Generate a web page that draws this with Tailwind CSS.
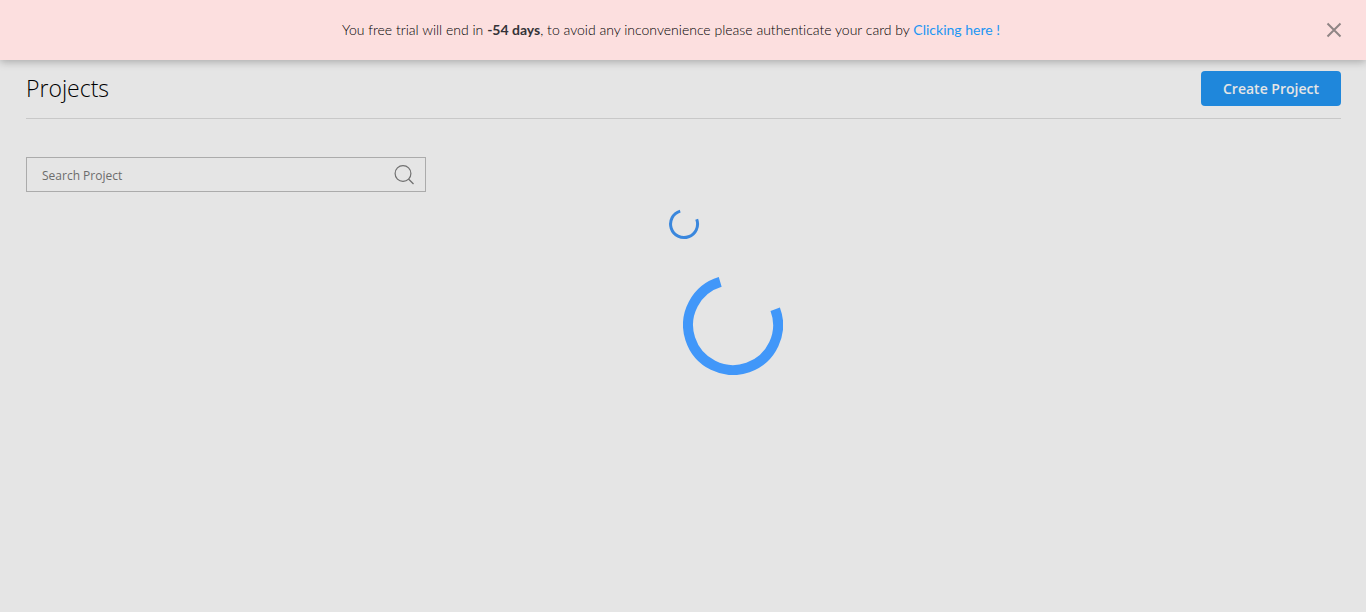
<!DOCTYPE html>
<html lang="en">
<head>
<meta charset="utf-8">
<meta name="viewport" content="width=device-width, initial-scale=1">
<title>Projects</title>
<script src="https://cdn.jsdelivr.net/npm/@tailwindcss/browser@4"></script>
</head>
<body class="min-h-screen bg-[#e5e5e5] font-['Open_Sans',sans-serif] text-[#1d1d1d]">
  <div role="alert" class="relative flex h-15 items-center bg-[#fcdfdf] pr-[22px] pl-6 shadow-[0_2px_8px_rgba(0,0,0,0.26)]">
    <p class="flex-1 pr-1.5 text-center font-['Lato',sans-serif] text-sm font-light text-black [font-variant-ligatures:none]">You free trial will end in <b class="font-bold text-[#333338]">-54 days</b>, to avoid any inconvenience please authenticate your card by <a href="#" class="font-normal text-[#2196f3]">Clicking here !</a></p>
    <button type="button" aria-label="Close" class="p-0.5 text-[#8f8585]">
      <svg class="size-4" viewBox="0 0 16 16" fill="none" stroke="currentColor" stroke-width="2"><path d="M1.5 1.5l13 13M14.5 1.5l-13 13"/></svg>
    </button>
  </div>
  <main class="pr-[25px] pl-[26px]">
    <header class="flex items-center justify-between border-b border-[#c8c8c8] pt-[11px] pb-3">
      <h1 class="pb-0.5 text-[23px] leading-8 font-light text-black">Projects</h1>
      <button type="button" class="h-[35px] w-35 rounded bg-[#1f87db] text-sm font-semibold text-[#e5e5e5]">Create Project</button>
    </header>
    <label class="mt-[38px] flex h-[35px] w-full max-w-100 items-center border border-[#ababab] pr-[11px] pl-[15px]">
      <input type="text" placeholder="Search Project" aria-label="Search Project" class="min-w-0 flex-1 bg-transparent pt-0.5 text-xs outline-none placeholder:text-[#6c6c6c]">
      <svg class="size-5" viewBox="0 0 20 20" fill="none" stroke="#707070" stroke-width="1.2"><circle cx="9" cy="8.5" r="7.9"/><path d="M14.5 14l5 5"/></svg>
    </label>
    <div class="mt-4 flex justify-center">
      <svg class="size-8" viewBox="0 0 32 32" fill="none" stroke="#3a87dd" stroke-width="3" role="img" aria-label="Loading projects"><path d="M12.2 3.1A13.5 13.5 0 1 0 28.7 11.3"/></svg>
    </div>
  </main>
  <div class="pointer-events-none fixed top-[45%] left-1/2">
    <svg class="size-25" viewBox="0 0 100 100" fill="none" stroke="#4197f9" stroke-width="10" role="img" aria-label="Loading"><path d="M37.2 6.9A45 45 0 1 0 92.2 34.2"/></svg>
  </div>
</body>
</html>
